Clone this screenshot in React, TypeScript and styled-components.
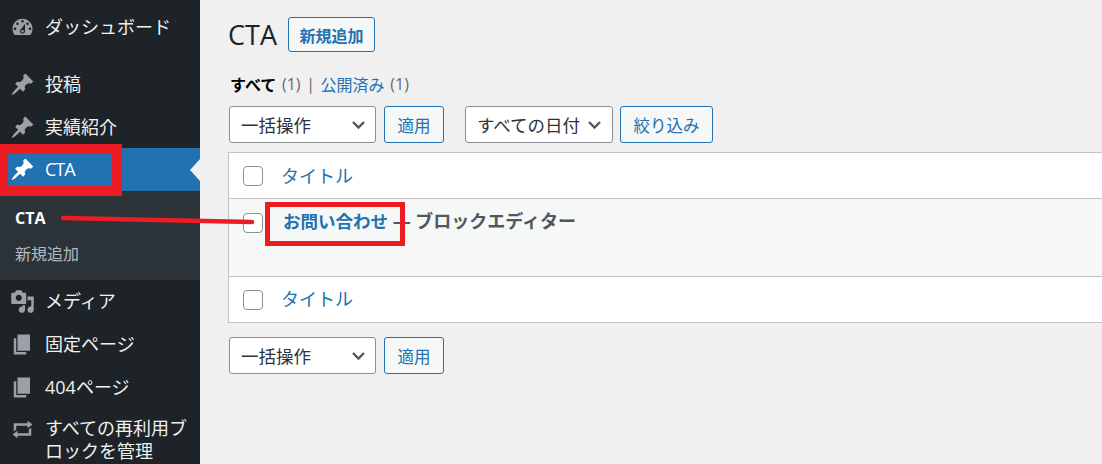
import React from "react";
import styled, { createGlobalStyle } from "styled-components";

const Global = createGlobalStyle`
  html, body { margin: 0; padding: 0; background: #f0f0f1; }
  body { font-family: "Open Sans", "Noto Sans CJK JP", sans-serif; color: #3c434a; }
`;

const Page = styled.div`
  position: relative;
  display: flex;
  width: 1102px;
  height: 464px;
  overflow: hidden;
`;

const Sidebar = styled.nav`
  width: 200px;
  flex: none;
  background: #1d2327;
  padding-top: 6px;
  box-sizing: border-box;
`;

const MenuItem = styled.div<{ $active?: boolean; $gap?: number; $tall?: boolean; $height?: number }>`
  position: relative;
  display: flex;
  align-items: ${(p) => (p.$tall ? "flex-start" : "center")};
  height: ${(p) => (p.$tall ? "auto" : `${p.$height ?? 43}px`)};
  margin-top: ${(p) => p.$gap ?? 0}px;
  background: ${(p) => (p.$active ? "#2271b1" : "transparent")};
  color: ${(p) => (p.$active ? "#fff" : "#f0f0f1")};
  font-size: 18px;
  line-height: 23px;
`;

const IconSlot = styled.span<{ $active?: boolean }>`
  width: 45px;
  flex: none;
  display: flex;
  justify-content: flex-start;
  padding-left: 10px;
  box-sizing: border-box;
  color: ${(p) => (p.$active ? "#fff" : "#9ca1a7")};
  svg { width: 25px; height: 25px; fill: currentColor; display: block; }
`;

const ActiveLabel = styled.span`
  letter-spacing: -1px;
`;

const TallLabel = styled.span`
  width: 150px;
  flex: none;
`;

const ActiveArrow = styled.span`
  position: absolute;
  right: 0;
  top: 50%;
  margin-top: -11px;
  border: 11px solid transparent;
  border-right: 10px solid #f0f0f1;
  border-left: 0;
`;

const Submenu = styled.div`
  background: #2c3338;
  height: 89px;
  padding-top: 9px;
  box-sizing: border-box;
`;

const SubItem = styled.div<{ $current?: boolean }>`
  height: 35px;
  display: flex;
  align-items: center;
  padding-left: 15px;
  font-size: 16px;
  font-weight: ${(p) => (p.$current ? 700 : 400)};
  color: ${(p) => (p.$current ? "#fff" : "rgba(240,246,252,.7)")};
`;

const Main = styled.main`
  flex: 1;
  min-width: 0;
  padding: 17px 0 0 28px;
  box-sizing: border-box;
`;

const Heading = styled.div`
  display: flex;
  align-items: center;
  gap: 11px;
  height: 35px;
`;

const Title = styled.h1`
  margin: 0;
  font-size: 27px;
  font-weight: 400;
  color: #1d2327;
  line-height: 35px;
`;

const Button = styled.button<{ $strong?: boolean; $width: number; $left?: number }>`
  width: ${(p) => p.$width}px;
  height: ${(p) => (p.$strong ? 35 : 37)}px;
  margin-left: ${(p) => p.$left ?? 0}px;
  padding: 0;
  border: 1px solid #2271b1;
  border-radius: 3px;
  background: #f6f7f7;
  color: #2271b1;
  font-family: inherit;
  font-size: ${(p) => (p.$strong ? 16 : 16.5)}px;
  font-weight: ${(p) => (p.$strong ? 700 : 400)};
`;

const Status = styled.div`
  margin: 21px 0 0 2px;
  height: 22px;
  display: flex;
  align-items: center;
  font-size: 16px;
  color: #646970;
  white-space: pre;
  word-spacing: 1.5px;
`;

const StatusCurrent = styled.b`
  color: #000;
  font-weight: 700;
`;

const StatusLink = styled.span`
  color: #2271b1;
`;

const Tablenav = styled.div<{ $top: number }>`
  display: flex;
  align-items: center;
  margin: ${(p) => p.$top}px 0 0 1px;
  height: 37px;
`;

const SelectBox = styled.div<{ $width: number; $left?: number; $pad: number }>`
  display: flex;
  align-items: center;
  justify-content: space-between;
  width: ${(p) => p.$width}px;
  height: 37px;
  box-sizing: border-box;
  margin-left: ${(p) => p.$left ?? 0}px;
  padding: 0 ${(p) => p.$pad}px 0 11px;
  border: 1px solid #8c8f94;
  border-radius: 3px;
  background: #fff;
  color: #2c3338;
  font-size: 17.5px;
  svg { width: 15px; height: 15px; flex: none; }
`;

const Table = styled.div`
  margin-top: 9px;
  border: 1px solid #c3c4c7;
  border-right: 0;
  background: #fff;
  box-sizing: border-box;
`;

const Row = styled.div<{ $alt?: boolean; $height: number; $line?: boolean }>`
  display: flex;
  align-items: ${(p) => (p.$alt ? "flex-start" : "center")};
  height: ${(p) => p.$height}px;
  box-sizing: border-box;
  padding: ${(p) => (p.$alt ? "14px" : "0")} 0 0 14px;
  background: ${(p) => (p.$alt ? "#f6f7f7" : "#fff")};
  border-top: ${(p) => (p.$line ? "1px solid #c3c4c7" : "0")};
`;

const Check = styled.input.attrs({ type: "checkbox" })`
  appearance: none;
  width: 20px;
  height: 20px;
  flex: none;
  margin: 0 18px 0 0;
  border: 1px solid #8c8f94;
  border-radius: 4px;
  background: #fff;
`;

const ColLink = styled.span<{ $lift: number }>`
  color: #2271b1;
  font-size: 18px;
  margin-top: -${(p) => p.$lift}px;
`;

const PostCell = styled.div`
  margin: -6px 0 0 2px;
  font-size: 18px;
  font-weight: 700;
  color: #50575e;
  white-space: pre;
`;

const PostLink = styled.span`
  color: #2271b1;
  font-size: 17.5px;
`;

const RedBox = styled.div`
  position: absolute;
  box-sizing: border-box;
  border-style: solid;
  border-color: #ed1c24;
`;

const SideBox = styled(RedBox)`
  left: 0;
  top: 144px;
  width: 122px;
  height: 52px;
  border-width: 10px 10px 10px 8px;
`;

const TitleBox = styled(RedBox)`
  left: 265px;
  top: 202px;
  width: 140px;
  height: 44px;
  border-width: 5px;
`;

const Connector = styled.svg`
  position: absolute;
  left: 55px;
  top: 210px;
  width: 205px;
  height: 20px;
`;

const P = {
  dash: "M3.76 16h12.48c1.1-1.37 1.76-3.11 1.76-5 0-4.42-3.58-8-8-8s-8 3.58-8 8c0 1.89.66 3.63 1.76 5zM10 4c.55 0 1 .45 1 1s-.45 1-1 1-1-.45-1-1 .45-1 1-1zM6 6c.55 0 1 .45 1 1s-.45 1-1 1-1-.45-1-1 .45-1 1-1zm8 0c.55 0 1 .45 1 1s-.45 1-1 1-1-.45-1-1 .45-1 1-1zm-5.37 5.55L12 7v6c0 1.1-.9 2-2 2s-2-.9-2-2c0-.57.24-1.08.63-1.45zM4 10c.55 0 1 .45 1 1s-.45 1-1 1-1-.45-1-1 .45-1 1-1zm12 0c.55 0 1 .45 1 1s-.45 1-1 1-1-.45-1-1 .45-1 1-1zm-5 3c0-.55-.45-1-1-1s-1 .45-1 1 .45 1 1 1 1-.45 1-1z",
  pin: "M10.44 3.02l1.82-1.82 6.36 6.35-1.83 1.82c-1.05-.68-2.48-.57-3.41.36l-.75.75c-.92.93-1.04 2.35-.35 3.41l-1.83 1.82-2.41-2.41-2.8 2.79c-.42.42-3.38 2.71-3.8 2.29s1.86-3.39 2.28-3.81l2.79-2.79L4.1 9.36l1.83-1.82c1.05.69 2.48.57 3.4-.36l.75-.75c.93-.92 1.05-2.35.36-3.41z",
  media: "M13 11V4c0-.55-.45-1-1-1h-1.67L9 1H5L3.67 3H2c-.55 0-1 .45-1 1v7c0 .55.45 1 1 1h10c.55 0 1-.45 1-1zM7 4.5c1.38 0 2.5 1.12 2.5 2.5S8.38 9.5 7 9.5 4.5 8.38 4.5 7 5.62 4.5 7 4.5zM14 6h5v10.5c0 1.38-1.12 2.5-2.5 2.5S14 17.88 14 16.5s1.12-2.5 2.5-2.5c.17 0 .34.02.5.05V9h-3V6zm-4 8.05V13h2v3.5c0 1.38-1.12 2.5-2.5 2.5S7 17.88 7 16.5 8.12 14 9.5 14c.17 0 .34.02.5.05z",
  page: "M6 15V2h10v13H6zm-1 1h8v2H3V5h2v11z",
  repeat: "M5 7v3l-2 1.5V5h11V3l4 3.01L14 9V7H5zm10 6v-3l2-1.5V15H6v2l-4-3.01L6 11v2h9z",
};

const Icon = ({ d }: { d: string }) => (
  <svg viewBox="0 0 20 20" aria-hidden="true">
    <path d={d} />
  </svg>
);

const Chevron = () => (
  <svg viewBox="0 0 15 15" aria-hidden="true">
    <path d="M2 5l5.5 5.5L13 5" fill="none" stroke="#50575e" strokeWidth="2.4" />
  </svg>
);

const Item = ({ d, label, gap, height }: { d: string; label: string; gap?: number; height?: number }) => (
  <MenuItem $gap={gap} $height={height}>
    <IconSlot>
      <Icon d={d} />
    </IconSlot>
    {label}
  </MenuItem>
);

const BulkBar = ({ top, children }: { top: number; children?: React.ReactNode }) => (
  <Tablenav $top={top}>
    <SelectBox $width={147} $pad={9}>
      一括操作
      <Chevron />
    </SelectBox>
    <Button $width={60} $left={8}>適用</Button>
    {children}
  </Tablenav>
);

export default function App() {
  return (
    <>
      <Global />
      <Page>
        <Sidebar>
          <Item d={P.dash} label="ダッシュボード" />
          <Item d={P.pin} label="投稿" gap={14} />
          <Item d={P.pin} label="実績紹介" height={42} />
          <MenuItem $active>
            <IconSlot $active>
              <Icon d={P.pin} />
            </IconSlot>
            <ActiveLabel>CTA</ActiveLabel>
            <ActiveArrow />
          </MenuItem>
          <Submenu>
            <SubItem $current>CTA</SubItem>
            <SubItem>新規追加</SubItem>
          </Submenu>
          <Item d={P.media} label="メディア" />
          <Item d={P.page} label="固定ページ" />
          <Item d={P.page} label="404ページ" />
          <MenuItem $tall $gap={8}>
            <IconSlot>
              <Icon d={P.repeat} />
            </IconSlot>
            <TallLabel>すべての再利用ブロックを管理</TallLabel>
          </MenuItem>
        </Sidebar>
        <Main>
          <Heading>
            <Title>CTA</Title>
            <Button $strong $width={87}>新規追加</Button>
          </Heading>
          <Status>
            <StatusCurrent>すべて</StatusCurrent> (1) | <StatusLink>公開済み</StatusLink> (1)
          </Status>
          <BulkBar top={11}>
            <SelectBox $width={148} $left={21} $pad={10}>
              すべての日付
              <Chevron />
            </SelectBox>
            <Button $width={93} $left={7}>絞り込み</Button>
          </BulkBar>
          <Table>
            <Row $height={45}>
              <Check />
              <ColLink $lift={1}>タイトル</ColLink>
            </Row>
            <Row $alt $line $height={78}>
              <Check />
              <PostCell>
                <PostLink>お問い合わせ</PostLink> — ブロックエディター
              </PostCell>
            </Row>
            <Row $line $height={46}>
              <Check />
              <ColLink $lift={3}>タイトル</ColLink>
            </Row>
          </Table>
          <BulkBar top={14} />
        </Main>
        <SideBox />
        <TitleBox />
        <Connector viewBox="0 0 205 20" aria-hidden="true">
          <path d="M8 8 L197 12" stroke="#ed1c24" strokeWidth="4.5" strokeLinecap="round" fill="none" />
        </Connector>
      </Page>
    </>
  );
}
